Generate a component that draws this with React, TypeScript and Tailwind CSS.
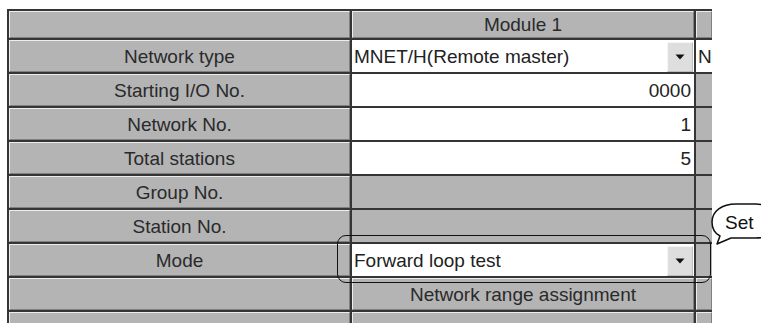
import React from "react";

const bevel =
  "bg-[#b4b4b5] border border-t-[#ededed] border-l-[#ededed] border-r-[#808080] border-b-[#808080]";
const flat = "bg-[#b4b4b5]";
const white = "bg-white";

function Label({ text }: { text?: string }) {
  return (
    <div className={`${bevel} flex items-center justify-center text-[19px] leading-none text-[#2a2a2a]`}>
      {text}
    </div>
  );
}

function Arrow() {
  return (
    <svg width="10" height="6" viewBox="0 0 10 6">
      <path d="M0.5 0.5 L9.5 0.5 L5 5.5 Z" fill="#111" />
    </svg>
  );
}

function Dropdown({ text }: { text: string }) {
  return (
    <div className={`${white} flex items-stretch min-w-0`}>
      <div className="flex-1 flex items-center pl-[2px] text-[19px] leading-none text-[#222] whitespace-nowrap overflow-hidden">
        {text}
      </div>
      <div className="w-[26px] mt-[2px] mr-[1px] bg-[#dedede] border border-t-[#f6f6f6] border-l-[#f6f6f6] border-r-[#bdbdbd] border-b-[#bdbdbd] flex items-center justify-center">
        <Arrow />
      </div>
    </div>
  );
}

function Num({ v }: { v: string }) {
  return (
    <div className={`${white} flex items-center justify-end pr-[3px] text-[19px] leading-none text-[#222]`}>
      {v}
    </div>
  );
}

export default function App() {
  return (
    <div className="relative w-[761px] h-[323px] bg-white overflow-hidden font-['Liberation_Sans',Arial,sans-serif]">
      <div className="pt-[9px] pl-[7px]">
        <div className="grid grid-cols-[341px_342px_16px] grid-rows-[27px_repeat(9,32px)] gap-[2px] bg-[#353535] pt-[2px] pl-[2px] w-[705px]">
          {/* header */}
          <Label />
          <Label text="Module 1" />
          <div className={bevel} />

          {/* Network type */}
          <Label text="Network type" />
          <Dropdown text="MNET/H(Remote master)" />
          <div className={`${white} flex items-center pl-[2px] text-[19px] leading-none text-[#222] whitespace-nowrap`}>
            N
          </div>

          {/* Starting I/O */}
          <Label text="Starting I/O No." />
          <Num v="0000" />
          <div className={flat} />

          <Label text="Network No." />
          <Num v="1" />
          <div className={flat} />

          <Label text="Total stations" />
          <Num v="5" />
          <div className={flat} />

          <Label text="Group No." />
          <div className={flat} />
          <div className={flat} />

          <Label text="Station No." />
          <div className={flat} />
          <div className={flat} />

          <Label text="Mode" />
          <Dropdown text="Forward loop test" />
          <div className={flat} />

          <Label />
          <Label text="Network range assignment" />
          <div className={bevel} />

          <Label />
          <div className={bevel} />
          <div className={bevel} />
        </div>
      </div>

      {/* callout frame */}
      <div className="absolute left-[337px] top-[235px] w-[374px] h-[48px] border-[1.5px] border-[#111] rounded-[9px]" />

      {/* speech bubble */}
      <svg className="absolute left-[704px] top-[198px]" width="57" height="52" viewBox="0 0 57 52">
        <path
          d="M16 38 C10 35 8 30 8 24 C8 13 18 6 32 6 L52 6 C64 6 72 13 72 23 C72 34 64 40 52 40 L27 40 L13 46 Z"
          fill="#fff"
          stroke="#111"
          strokeWidth="1.5"
          strokeLinejoin="round"
        />
      </svg>
      <span className="absolute left-[725px] top-[213px] text-[19px] leading-none text-[#111]">
        Set
      </span>
    </div>
  );
}
